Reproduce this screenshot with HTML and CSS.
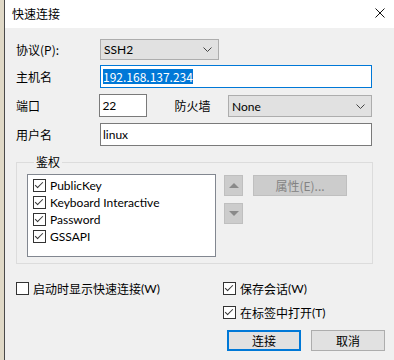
FILE: index.html
```html
<!DOCTYPE html>
<html lang="zh-CN">
<head>
  <meta charset="UTF-8">
  <title>快速连接</title>
  <link rel="stylesheet" href="styles.css">
</head>
<body>
  <div class="screen">
    <div class="behind"></div>
    <div class="dialog">
      <div class="titlebar">
        <span class="title">快速连接</span>
        <svg class="close" width="10" height="10" viewBox="0 0 10 10">
          <path d="M0.5 0.5 L9.5 9.5 M9.5 0.5 L0.5 9.5" stroke="#111" stroke-width="1" fill="none"/>
        </svg>
      </div>

      <div class="content">
        <div class="form">
          <div class="row r1">
            <span class="label">协议(P):</span>
            <div class="select protocol">
              <span>SSH2</span>
              <svg width="9" height="5" viewBox="0 0 9 5"><path d="M0.5 0.5 L4.5 4.5 L8.5 0.5" stroke="#444" fill="none"/></svg>
            </div>
          </div>
          <div class="row">
            <span class="label">主机名</span>
            <div class="input focused"><span class="sel">192.168.137.234</span></div>
          </div>
          <div class="row">
            <span class="label">端口</span>
            <div class="input port">22</div>
            <span class="label fw">防火墙</span>
            <div class="select firewall">
              <span>None</span>
              <svg width="9" height="5" viewBox="0 0 9 5"><path d="M0.5 0.5 L4.5 4.5 L8.5 0.5" stroke="#444" fill="none"/></svg>
            </div>
          </div>
          <div class="row">
            <span class="label">用户名</span>
            <div class="input">linux</div>
          </div>
        </div>

        <fieldset class="auth">
          <legend>鉴权</legend>
          <div class="auth-inner">
            <div class="listbox">
              <div class="item"><span class="check on"></span>PublicKey</div>
              <div class="item"><span class="check on"></span>Keyboard Interactive</div>
              <div class="item"><span class="check on"></span>Password</div>
              <div class="item"><span class="check on"></span>GSSAPI</div>
            </div>
            <div class="movers">
              <div class="btn-small">
                <svg width="10" height="5" viewBox="0 0 10 5"><path d="M0 5 L5 0 L10 5 Z" fill="#8a8a8a"/></svg>
              </div>
              <div class="btn-small">
                <svg width="10" height="5" viewBox="0 0 10 5"><path d="M0 0 L5 5 L10 0 Z" fill="#8a8a8a"/></svg>
              </div>
            </div>
            <div class="btn disabled">属性(E)...</div>
          </div>
        </fieldset>

        <div class="options">
          <label class="opt"><span class="check"></span>启动时显示快速连接<u>(W)</u></label>
          <div class="opt-col">
            <label class="opt"><span class="check on"></span>保存会话<u>(W)</u></label>
            <label class="opt"><span class="check on"></span>在标签中打开<u>(T)</u></label>
          </div>
        </div>

        <div class="actions">
          <div class="btn default">连接</div>
          <div class="btn">取消</div>
        </div>
      </div>
    </div>
  </div>
</body>
</html>
```

FILE: styles.css
```css
body {
  margin: 0;
  font-family: "Lato", "Noto Sans CJK SC", sans-serif;
  font-size: 12px;
  color: #000;
}
.screen {
  display: flex;
  width: 394px;
  height: 360px;
  overflow: hidden;
}
.behind {
  width: 4px;
  background-color: #e0d9c7;
}
.dialog {
  flex: 1;
  display: flex;
  flex-direction: column;
  background-color: #f0f0f0;
  border-left: 1px solid #4a4a4a;
}
.titlebar {
  height: 28px;
  background-color: #fff;
  display: flex;
  align-items: center;
  justify-content: space-between;
  padding: 0 9px 0 7px;
}
.title {
  font-family: "Noto Sans CJK SC", sans-serif;
  font-size: 12px;
  line-height: 16px;
}
.close {
  margin-top: -3px;
}
.content {
  padding: 11px 0 0 11px;
}

/* top form */
.form {
  display: flex;
  flex-direction: column;
  gap: 6px;
  width: 356px;
}
.row {
  display: flex;
  align-items: center;
  height: 23px;
}
.row.r1 {
  height: 21px;
  margin-bottom: -1px;
}
.label {
  width: 84px;
  font-family: "Noto Sans CJK SC", sans-serif;
}
.label.fw {
  width: 54px;
  padding-left: 27px;
}
.select {
  height: 21px;
  box-sizing: border-box;
  background-color: #e1e1e1;
  border: 1px solid #adadad;
  display: flex;
  align-items: center;
  justify-content: space-between;
  padding: 0 6px 0 3px;
}
.protocol {
  width: 119px;
}
.firewall {
  width: 145px;
  height: 22px;
  margin-top: 1px;
}
.input {
  flex: 1;
  height: 23px;
  box-sizing: border-box;
  background-color: #fff;
  border: 1px solid #7a7a7a;
  padding: 0 2px;
  display: flex;
  align-items: center;
}
.input.focused {
  border-color: #0078d7;
}
.input.port {
  flex: none;
  width: 48px;
}
.sel {
  background-color: #0078d7;
  color: #fff;
  line-height: 15px;
  font-family: "Noto Sans CJK SC", sans-serif;
}

/* auth group */
.auth {
  margin: 8px 0 0 0;
  width: 357px;
  box-sizing: border-box;
  border: 1px solid #dcdcdc;
  padding: 4px 0 6px 10px;
}
.auth legend {
  margin-left: 7px;
  padding: 0 2px;
  font-family: "Noto Sans CJK SC", sans-serif;
  line-height: 16px;
}
.auth-inner {
  display: flex;
  align-items: flex-start;
}
.listbox {
  width: 189px;
  height: 83px;
  box-sizing: border-box;
  background-color: #fff;
  border: 1px solid #828790;
  padding: 2px 0 0 5px;
}
.item {
  display: flex;
  align-items: center;
  height: 17px;
}
.check {
  width: 13px;
  height: 13px;
  box-sizing: border-box;
  border: 1px solid #333;
  background-color: #fff;
  margin-right: 4px;
  position: relative;
  flex: none;
}
.check.on::after {
  content: "";
  position: absolute;
  left: 3px;
  top: 0px;
  width: 3px;
  height: 7px;
  border-right: 1px solid #333;
  border-bottom: 1px solid #333;
  transform: rotate(45deg);
}
.movers {
  display: flex;
  flex-direction: column;
  gap: 7px;
  margin: 1px 0 0 8px;
}
.btn-small {
  width: 19px;
  height: 21px;
  box-sizing: border-box;
  background-color: #cccccc;
  border: 1px solid #bfbfbf;
  display: flex;
  align-items: center;
  justify-content: center;
}
.btn {
  width: 74px;
  height: 21px;
  box-sizing: border-box;
  background-color: #e1e1e1;
  border: 1px solid #adadad;
  display: flex;
  align-items: center;
  justify-content: center;
  font-family: "Noto Sans CJK SC", sans-serif;
}
.btn.disabled {
  width: 94px;
  margin: 1px 0 0 10px;
  background-color: #cccccc;
  border-color: #bfbfbf;
  color: #838383;
}
.btn.default {
  border: 2px solid #0078d7;
}

/* bottom */
.options {
  display: flex;
  margin-top: 17px;
}
.opt {
  display: flex;
  align-items: center;
  height: 14px;
  font-family: "Noto Sans CJK SC", sans-serif;
}
.opt u {
  text-decoration: none;
  font-family: "Lato", sans-serif;
}
.opt .check {
  margin-right: 4px;
}
.options > .opt {
  width: 207px;
}
.opt-col {
  display: flex;
  flex-direction: column;
  gap: 10px;
}
.actions {
  display: flex;
  justify-content: flex-end;
  gap: 10px;
  margin: 11px 9px 0 0;
}
```
